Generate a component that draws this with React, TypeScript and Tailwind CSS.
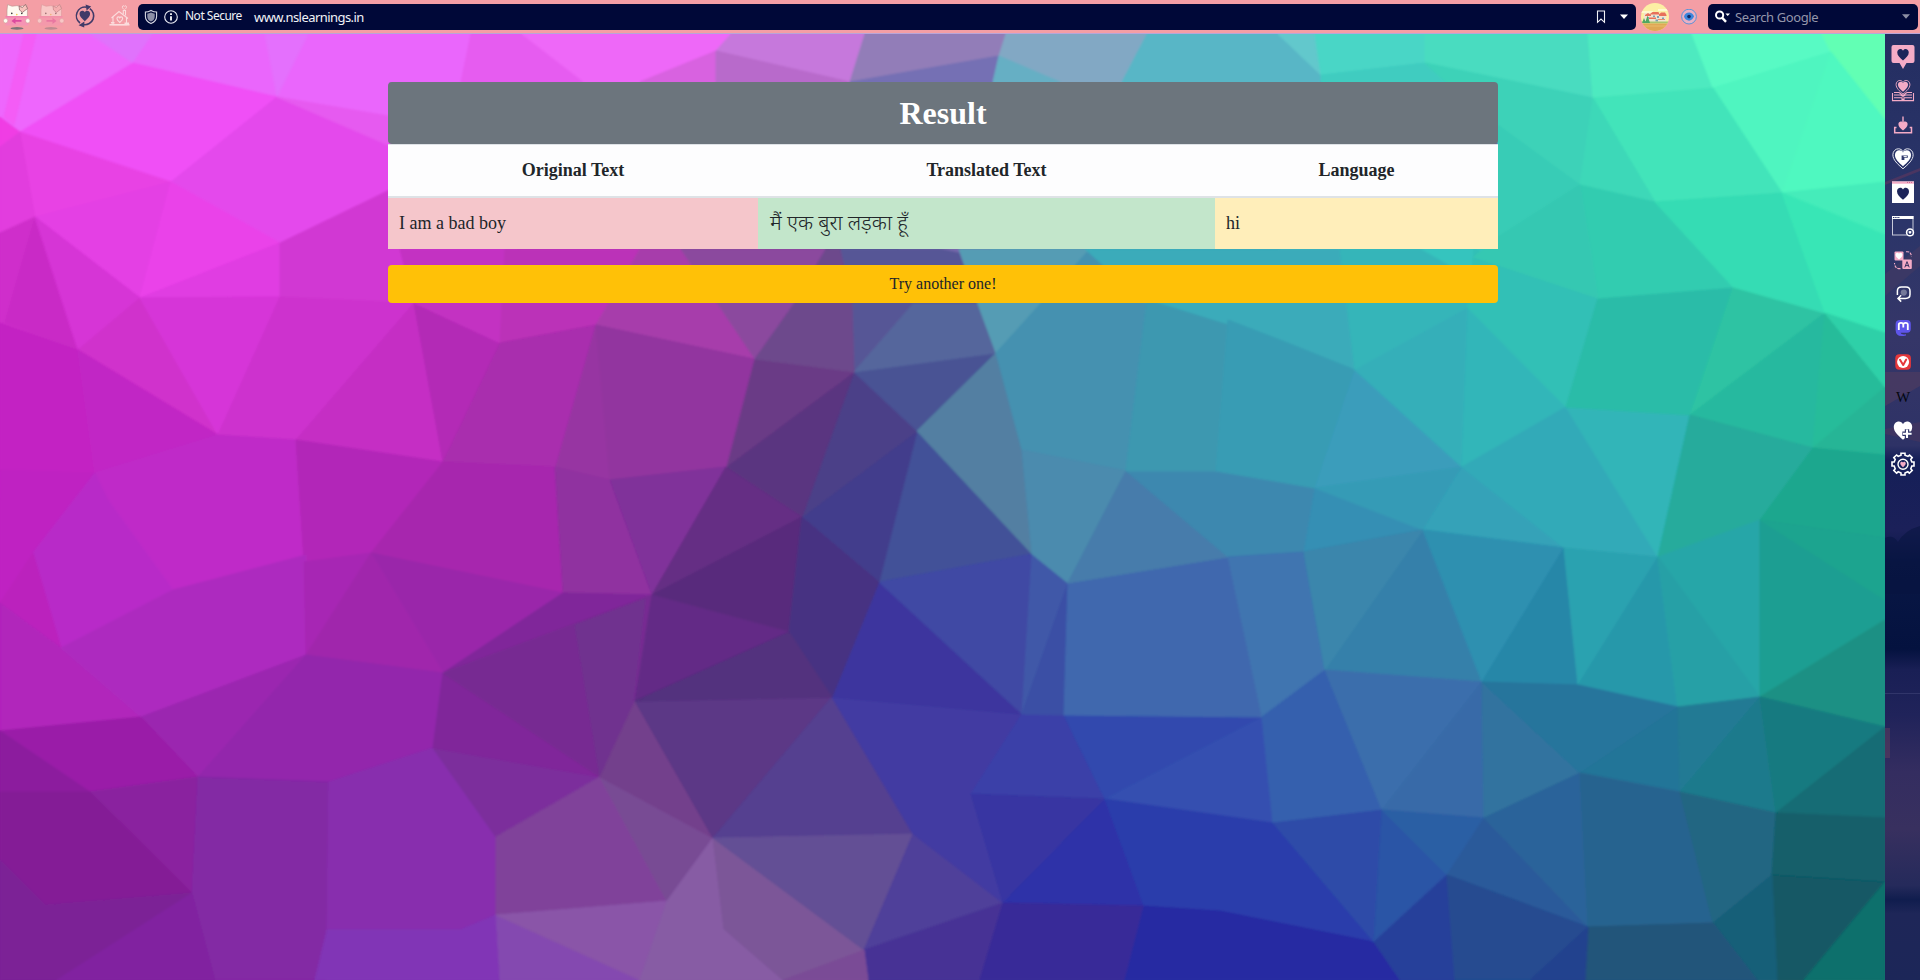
import React from "react";

const FACETS = `
#36c4be 1280,230 1510,230 1500,300 1280,300
#7668ac 900,240 990,240 990,262 900,262
#ee66fd 0,34 90,34 133,63 20,132 0,117
#f45cf6 24,34 36,34 14,125 4,117
#e072fc 90,34 153,34 133,63
#ea66fc 153,34 471,34 461,82 388,82 400,118 277,97 133,63
#e46ffd 265,34 308,34 277,97
#f050f6 20,132 133,63 277,97 171,182
#f03de4 0,117 20,132 0,147
#e843e4 20,132 171,182 35,217
#e23ede 0,147 20,132 35,217 0,233
#e44aec 277,97 400,145 400,187 280,243 171,182
#e65af0 277,97 400,118 400,150
#e43fe4 35,217 171,182 140,298
#ea43e9 171,182 280,243 140,298
#e03ce2 280,243 280,297 140,298
#d139d3 280,243 400,185 520,250 414,303 280,297
#cf2fcb 0,233 35,217 78,350 0,323
#c92cc6 35,217 78,350 5,322
#d634d6 35,217 140,298 78,350
#d030cc 78,350 140,298 218,435
#d636d8 140,298 280,297 218,435
#cd32ce 280,297 414,303 296,440 218,435
#c52ec4 414,303 443,462 296,440
#b32ab6 414,303 500,343 443,462
#c331c2 400,249 510,249 500,343 414,303
#bb33b8 505,249 640,249 640,303 596,325 500,343
#a92dae 500,343 596,325 610,480 555,470 443,462
#9734a2 596,325 610,480 555,470
#c324c3 0,323 78,350 95,473 0,500
#c127c5 78,350 218,435 95,473
#bf2cc8 218,435 296,440 304,562 173,590 108,500 95,473
#b228b8 296,440 443,462 371,553 304,562
#a728ae 443,462 555,467 563,593 371,553
#9030a0 555,467 610,480 652,595 563,593
#bf24c2 0,470 95,473 108,500 33,553 0,603
#b82bc8 95,473 108,500 173,590 61,648 33,553
#bb22bd 0,603 33,553 61,648
#b125bb 0,603 61,648 141,717 0,731
#ad2bbf 61,648 173,590 306,555 306,655 141,717
#a728b4 371,553 306,655 304,562
#9a26aa 371,553 563,593 443,673
#a026ac 371,553 443,673 306,655
#9b28b0 141,717 306,655 198,777
#9326ac 306,655 443,673 433,748 329,782 198,777
#9a1ea8 0,731 141,717 198,777 90,792
#8c1b9e 0,731 90,792 0,792
#8a229f 90,792 198,777 192,893
#841d96 0,792 90,792 192,893 45,905 0,860
#7c2096 0,860 45,905 192,893 57,980 0,980
#8329a4 192,893 198,777 329,782 327,980 215,980
#8124a0 192,893 215,980 57,980
#882fae 329,782 433,748 496,837 496,915 460,930 327,930
#8134b6 327,930 460,930 496,915 500,980 315,980
#7b2f9c 433,748 600,777 496,837
#80289a 443,673 563,593 652,595 632,710 600,777 433,748
#772b92 443,673 652,595 632,710 600,777
#70318f 575,625 645,599 632,710 600,777
#80439a 496,837 600,777 713,838 667,901 496,915
#784c94 600,777 713,838 667,901
#8448b0 496,915 640,980 500,980
#8a55a8 496,915 667,901 640,980
#875ca4 667,901 713,838 864,950 783,980 640,980
#7c5698 713,838 864,950 783,980 724,929
#733f8c 600,777 635,701 713,838
#5c3886 635,701 832,697 713,838
#543f90 832,697 913,834 713,838
#634f95 713,838 913,834 864,950
#50409a 913,834 1003,903 864,950
#463295 864,950 1003,903 980,980 868,980
#7a4c96 864,950 868,980 783,980
#433ba2 832,697 1022,714 971,794 1003,903 913,834
#3c369e 832,697 879,582 1022,714
#3b41a8 1022,714 1064,715 1105,799 971,794
#3736a2 971,794 1105,799 1003,903
#2e32a8 1105,799 1144,906 1003,903
#382a98 1003,903 1144,906 1125,980 980,980
#3049ae 1064,715 1262,717 1105,799
#3450b0 1262,717 1273,823 1105,799
#2c3dab 1105,799 1273,823 1374,942 1220,911 1144,906
#272ba2 1144,906 1220,911 1374,942 1400,980 1125,980
#435198 917,431 1032,554 879,582
#3f4aa4 879,582 1032,554 1022,714
#4158a8 1032,554 1068,583 1022,714
#3a4fa5 1068,583 1064,715 1022,714
#4068ae 1068,583 1228,557 1262,717 1064,715
#433d8c 917,431 879,582 802,517
#4b4088 854,372 917,431 802,517
#5a3580 854,372 802,517 726,467
#6a3a86 754,359 854,372 726,467
#4a5294 854,372 996,353 917,431
#565696 830,249 940,249 959,253 978,304 913,304 854,372
#55669c 978,304 996,353 854,372 913,304
#6d488c 754,359 793,304 825,249 840,249 852,304 854,372
#8b489e 680,249 825,249 793,304 754,359 717,304
#a73eab 596,325 640,249 680,249 717,304 754,359
#92359f 596,325 754,359 726,467 610,480
#80309a 610,480 726,467 652,595
#652f84 726,467 802,517 652,595
#582c7c 802,517 789,632 652,595
#473382 802,517 879,582 832,697 789,632
#632a86 652,595 789,632 635,701
#53307e 789,632 832,697 635,701
#527fa2 996,353 1022,450 1032,554 917,431
#559cb4 959,249 1090,249 996,353 978,304
#4591b0 1090,249 1147,300 1126,471 1022,450 996,353
#4b8bae 1022,450 1126,471 1068,583 1032,554
#467cab 1126,471 1228,557 1068,583
#3d88af 1126,471 1216,471 1315,488 1304,552 1228,557
#3aabba 1085,249 1350,249 1355,370 1228,325 1147,304
#3c98b0 1147,300 1228,325 1216,471 1126,471
#389cb4 1228,320 1280,340 1355,370 1315,488 1216,471
#36b5b9 1340,249 1420,249 1474,280 1468,308 1355,370
#3a9dbb 1355,370 1462,467 1315,488
#34afb9 1355,370 1468,308 1462,467
#31b6b9 1468,308 1566,407 1462,467
#33c0b6 1474,249 1598,298 1566,407 1468,308
#368fb4 1315,488 1423,530 1304,552
#359bb6 1315,488 1462,467 1423,530
#34a2b8 1462,467 1564,548 1423,530
#33aab8 1462,467 1566,407 1658,557 1564,548
#31b5b8 1566,407 1690,415 1658,557
#2bbca8 1598,298 1733,287 1690,415 1566,407
#2dc3a3 1733,287 1825,313 1690,415
#28b99f 1825,313 1813,448 1690,415
#27bc9a 1825,313 1885,387 1813,448
#25b596 1885,387 1885,455 1813,448
#25ab9c 1690,415 1813,448 1760,520 1658,557
#1ea78e 1813,448 1885,455 1885,538 1760,520
#e65cf0 471,34 522,34 584,82 461,82
#ee68f8 522,34 731,34 716,51 640,82 584,82
#d862e0 716,51 716,82 640,82
#c678dc 731,34 865,34 850,82 716,51
#b86acb 716,51 850,82 716,82
#927db8 865,34 1006,34 999,56 850,82
#7470b4 850,82 999,56 993,82
#82a8c4 1006,34 1147,34 1122,82 1050,82 999,56
#66afc4 999,56 1060,82 993,82
#58b6c6 1147,34 1278,34 1321,75 1320,82 1122,82
#62c8cc 1278,34 1315,34 1321,75
#4ad6c6 1315,34 1425,34 1425,63 1321,75
#3fccc0 1321,75 1425,63 1498,125 1321,82
#48dcc0 1425,34 1588,34 1593,98 1425,63
#4eeac0 1588,34 1692,34 1713,88 1593,98
#58fac4 1692,34 1885,34 1831,52 1713,88
#62ffb4 1822,34 1885,34 1885,120 1831,52
#4ff5c0 1713,88 1831,52 1782,193
#50f8c0 1831,52 1885,120 1885,182 1782,193
#42e4ba 1593,98 1713,88 1782,193 1655,202
#3dd2b8 1425,63 1593,98 1580,185 1498,130
#3dd8b8 1593,98 1655,202 1580,185
#38ccb6 1498,125 1580,185 1498,237
#33ccb0 1580,185 1655,202 1733,287 1598,298
#36c8b2 1498,237 1580,185 1598,298 1474,257
#36dcb4 1655,202 1782,193 1825,313 1733,287
#44ecba 1782,193 1885,182 1885,235
#38e6b6 1782,193 1885,235 1885,333 1825,313
#2fd0a8 1825,313 1885,333 1885,387
#3f74b0 1228,557 1304,552 1325,670 1262,717
#3680aa 1304,552 1423,530 1482,682 1325,670
#3a86ac 1304,552 1423,530 1325,670
#2d90b0 1423,530 1564,548 1482,682
#2887a8 1564,548 1578,685 1482,682
#2ca2b0 1564,548 1658,557 1578,685
#2898aa 1658,557 1678,707 1578,685
#26a6a8 1658,557 1760,520 1760,697 1678,707
#27a0a6 1658,557 1760,697 1678,707
#1f9e92 1760,520 1885,538 1885,620 1760,697
#1ea48f 1760,520 1885,538 1885,600
#1b9084 1885,620 1885,727 1760,697
#3560ae 1262,717 1325,670 1382,810 1273,823
#3b6eac 1325,670 1482,682 1382,810
#376aa8 1482,682 1484,818 1382,810
#31739f 1482,682 1580,773 1484,818
#28759c 1482,682 1578,685 1678,707 1580,773
#247498 1678,707 1680,792 1580,773
#217a94 1678,707 1760,697 1680,792
#1f7a8c 1760,697 1776,813 1680,792
#187a80 1760,697 1885,727 1776,813
#146c74 1885,727 1885,818 1776,813
#2d4ca8 1273,823 1382,810 1374,942
#2c54a6 1382,810 1447,875 1374,942
#2c5ea4 1382,810 1484,818 1447,875
#295a9a 1484,818 1588,927 1447,875
#2c639a 1484,818 1580,773 1588,927
#28648f 1580,773 1680,792 1713,923 1588,927
#206682 1680,792 1776,813 1772,875 1713,923
#125f6a 1776,813 1885,818 1885,882 1772,875
#125865 1772,875 1885,882 1804,980 1777,980
#0f706c 1885,882 1885,980 1804,980
#195e78 1772,875 1777,980 1757,980 1713,923
#21547a 1588,927 1713,923 1757,980 1585,980
#263f9a 1447,875 1455,980 1400,980 1374,942
#254c90 1447,875 1588,927 1530,980 1455,980
#24428e 1588,927 1585,980 1530,980
`
  .trim()
  .split("\n")
  .map((line) => {
    const at = line.indexOf(" ");
    return { fill: line.slice(0, at), points: line.slice(at + 1) };
  });

const HEART = "M0 5C-2.5 2.8-4.6 1-4.6-1.4-4.6-3-3.4-4.1-2.1-4.1-1.2-4.1-.4-3.6 0-2.8.4-3.6 1.2-4.1 2.1-4.1 3.4-4.1 4.6-3 4.6-1.4 4.6 1 2.5 2.8 0 5Z";

function Heart({ x, y, s = 1, fill, stroke, sw = 0 }: { x: number; y: number; s?: number; fill: string; stroke?: string; sw?: number }) {
  return <path d={HEART} transform={`translate(${x} ${y}) scale(${s})`} fill={fill} stroke={stroke} strokeWidth={sw} />;
}

function Backdrop() {
  return (
    <svg className="col-start-1 row-start-1 h-full w-full" viewBox="0 34 1885 946" preserveAspectRatio="none">
      <defs>
        <filter id="soften" filterUnits="userSpaceOnUse" x="0" y="34" width="1885" height="946">
          <feGaussianBlur stdDeviation="1.1" />
        </filter>
      </defs>
      <g id="facets">
        {FACETS.map((f, i) => (
          <polygon key={i} points={f.points} fill={f.fill} stroke={f.fill} strokeWidth="1" strokeLinejoin="round" />
        ))}
      </g>
      <use href="#facets" filter="url(#soften)" />
    </svg>
  );
}

function Kitty({ faded, forward }: { faded?: boolean; forward?: boolean }) {
  return (
    <svg className={faded ? "h-[34px] w-[34px] opacity-45" : "h-[34px] w-[34px]"} viewBox="0 0 34 34">
      <ellipse cx="17" cy="28.4" rx="6.5" ry="1.3" fill="#7d7478" />
      <path d="M7 16.5V10L7.6 4.6 12 6.2Q17 5.2 21 6.2L26.6 5 27.4 10V16.5Z" fill="#fffaf0" stroke="#b8908c" strokeWidth=".6" />
      <path d="M19 6L22.4 7.6 25.4 4.4 27.6 8.5 25 10.4 22.5 12.4 19.5 10Z" fill="#f7c3bc" stroke="#8a6264" strokeWidth=".7" />
      <circle cx="11.8" cy="13.4" r=".8" fill="#333" />
      <circle cx="21.8" cy="13.4" r=".8" fill="#333" />
      <circle cx="16.8" cy="14.6" r=".8" fill="#eec640" />
      <rect x="5.5" y="16.2" width="23" height="9.3" fill="#f594b4" />
      <rect x="5.5" y="16.2" width="23" height="1.2" fill="#f07cac" />
      <path d={forward ? "M12.5 20H18.5V17.8L22.5 20.9 18.5 24V21.8H12.5Z" : "M21.5 20H15.5V17.8L11.5 20.9 15.5 24V21.8H21.5Z"} fill="#dc4a9e" />
      <circle cx="5.6" cy="20.8" r="2.2" fill="#fffaf0" stroke="#c89a94" strokeWidth=".5" />
      <circle cx="27.8" cy="20.8" r="2.2" fill="#fffaf0" stroke="#c89a94" strokeWidth=".5" />
    </svg>
  );
}

function Toolbar() {
  return (
    <header className="flex h-[34px] w-full items-center border-b border-[#b9a5d8] bg-[#f49ea5]">
      <Kitty />
      <Kitty faded forward />
      <svg className="h-[34px] w-[34px]" viewBox="0 0 34 34">
        <g fill="none" stroke="#413a68" strokeWidth="1.6">
          <path d="M12 23A8.8 8.8 0 0 1 18.5 7.2" />
          <path d="M21.8 8.6A8.8 8.8 0 0 1 15.5 24.6" />
        </g>
        <path d="M17.6 4.4L23.2 6.4 18.6 10.4ZM16.4 21.6L10.6 25.2 16.2 27.6Z" fill="#413a68" />
        <Heart x={16.8} y={15.4} s={1.15} fill="#413a68" />
      </svg>
      <svg className="ml-[1px] h-[34px] w-[34px]" viewBox="0 0 34 34" fill="none" stroke="#fbdcdd" strokeWidth="1.1">
        <path d="M8.5 18L16 11.5 25 18.5M10 17V24.6H23.5V17.5" />
        <path d="M6.5 24.8H26.5M8 22.8H11.5M21.5 23.2H26" strokeWidth="1.6" />
        <path d="M20.3 14V10.5H22.5V15.5" />
        <Heart x={16.8} y={19.4} s={0.62} fill="none" stroke="#fbdcdd" sw={1.8} />
        <Heart x={21.4} y={7.6} s={0.45} fill="none" stroke="#fbdcdd" sw={2} />
      </svg>
      <div className="ml-[1px] flex h-[26px] w-[1498px] items-center rounded-[5px] bg-[#000838] text-[#f1f2f7]">
        <svg className="ml-[5px] h-[18px] w-[16px]" viewBox="0 0 16 18">
          <path d="M8 2.4C10 3.5 11.8 4 13.6 4V8.4C13.6 11.8 11.4 14 8 15.6 4.6 14 2.4 11.8 2.4 8.4V4C4.2 4 6 3.5 8 2.4Z" fill="none" stroke="#d7d9e4" strokeWidth="1.1" />
          <path d="M8 4.6C9.4 5.3 10.5 5.6 11.7 5.7V8.4C11.7 10.9 10.3 12.5 8 13.6 5.7 12.5 4.3 10.9 4.3 8.4V5.7C5.5 5.6 6.6 5.3 8 4.6Z" fill="#8d90a8" />
        </svg>
        <svg className="ml-[4px] h-[16px] w-[16px]" viewBox="0 0 16 16">
          <circle cx="8" cy="8" r="6.3" fill="none" stroke="#eceef5" strokeWidth="1.1" />
          <path d="M7.1 7.2H8.9V11.6H7.1ZM7.1 4.2H8.9V6H7.1Z" fill="#fff" />
        </svg>
        <span className="ml-[6px] w-[69px] whitespace-nowrap pb-[1px] font-['Noto_Sans','Open_Sans',sans-serif] text-[12px] leading-none tracking-[-0.5px]">Not Secure</span>
        <span className="grow whitespace-nowrap pt-[1px] font-['Noto_Sans','Open_Sans',sans-serif] text-[13px] leading-none tracking-[-0.55px]">www.nslearnings.in</span>
        <svg className="h-[16px] w-[12px]" viewBox="0 0 12 16">
          <path d="M2.5 2H9.5V13.3L6 10.1 2.5 13.3Z" fill="none" stroke="#f1f2f7" strokeWidth="1.1" />
        </svg>
        <svg className="ml-[13px] mr-[8px] h-[8px] w-[8px]" viewBox="0 0 8 8">
          <path d="M0 1.6H8L4 6Z" fill="#fff" />
        </svg>
      </div>
      <svg className="ml-[5px] h-[28px] w-[28px]" viewBox="0 0 28 28">
        <clipPath id="village">
          <circle cx="14" cy="14" r="14" />
        </clipPath>
        <g clipPath="url(#village)">
          <rect width="28" height="28" fill="#fcefa4" />
          <path d="M0 8H12V10H0ZM17 6H28V8H17Z" fill="#fff9cf" />
          <rect x="3" y="10" width="22" height="9" fill="#f1e3cf" />
          <path d="M4 12L7 10 10 12V13H4ZM9 11L11.5 9H17.5L18.5 11.5H9ZM18 11.5L20 9.5H24L25.5 12V13H18ZM8 14.5H15V16H8Z" fill="#e8705a" />
          <path d="M6 14H8V15.5H6ZM12 12.5H14V14H12ZM16 13H18V15H16ZM21 14.5H23V16.5H21ZM14.5 16.5H17V18.5H14.5Z" fill="#7a9fb4" />
          <path d="M17 16H24V17H17Z" fill="#e9896b" />
          <path d="M0 18.5H28V20.5H0Z" fill="#a9c46e" />
          <path d="M6.5 12.5L9 20H4ZM3 15L5 20H1Z" fill="#4fa763" />
          <rect y="20.5" width="28" height="8" fill="#dfa754" />
          <path d="M0 22.5H28V23.5H0Z" fill="#e9bc6b" />
        </g>
      </svg>
      <svg className="ml-[12px] h-[16px] w-[16px]" viewBox="0 0 16 16">
        <circle cx="8" cy="7.6" r="7.4" fill="#eab0c4" stroke="#5b93d8" strokeWidth="1" />
        <path d="M3 7.6Q4 3.4 8.4 3.4 12.4 4.2 13 7.6 11 12 7.4 11.6 4 11 3 7.6Z" fill="#3c86dc" />
        <circle cx="8" cy="7.6" r="1.8" fill="#102a66" />
      </svg>
      <div className="ml-[11px] flex h-[26px] w-[210px] items-center rounded-[5px] bg-[#000838]">
        <svg className="ml-[6px] h-[16px] w-[18px]" viewBox="0 0 18 16">
          <circle cx="5.6" cy="6" r="3.6" fill="none" stroke="#fff" strokeWidth="2" />
          <path d="M8 8.6L12 12.8" stroke="#fff" strokeWidth="2.4" />
          <path d="M11.4 4.4H16L13.7 7Z" fill="#fff" />
        </svg>
        <span className="ml-[3px] grow whitespace-nowrap pt-[1px] font-['Noto_Sans','Open_Sans',sans-serif] text-[13px] leading-none tracking-[-0.4px] text-[#9496aa]">Search Google</span>
        <svg className="mr-[8px] h-[8px] w-[8px]" viewBox="0 0 8 8">
          <path d="M0 1.2H8L4 5.8Z" fill="#8c8fa5" />
        </svg>
      </div>
    </header>
  );
}

function Slot({ children }: { children: React.ReactNode }) {
  return (
    <svg className="h-[34px] w-[34px] shrink-0" viewBox="0 0 34 34">
      {children}
    </svg>
  );
}

const PINK = "#f4abc6";
const NAVY = "#1c2459";

function Sidebar() {
  return (
    <aside className="grid w-[35px] shrink-0 overflow-hidden bg-[#1a2355]">
      <svg className="col-start-1 row-start-1 h-[946px] w-[35px]" viewBox="0 0 35 946">
        <defs>
          <linearGradient id="dusk" x1="0" y1="0" x2="0" y2="1">
            <stop offset="0" stopColor="#242e62" />
            <stop offset=".2" stopColor="#2b3569" />
            <stop offset=".32" stopColor="#353668" />
            <stop offset=".435" stopColor="#2e3266" />
            <stop offset=".45" stopColor="#151f58" />
            <stop offset=".525" stopColor="#1b2059" />
            <stop offset=".56" stopColor="#091745" />
            <stop offset=".65" stopColor="#04123f" />
            <stop offset=".672" stopColor="#191f55" />
            <stop offset=".72" stopColor="#20235a" />
            <stop offset=".78" stopColor="#342d60" />
            <stop offset=".84" stopColor="#38305f" />
            <stop offset=".9" stopColor="#252a5b" />
            <stop offset=".915" stopColor="#101d4e" />
            <stop offset=".93" stopColor="#1e2658" />
            <stop offset="1" stopColor="#1c2658" />
          </linearGradient>
        </defs>
        <rect width="35" height="946" fill="url(#dusk)" />
        <path d="M0 148L35 134V137L0 151Z" fill="#4a3561" />
        <path d="M0 240L35 212V232L0 262Z" fill="#3b3865" />
        <path d="M0 338H35V352L0 372Z" fill="#4a3b62" opacity=".8" />
        <path d="M0 395L35 388V408L0 400Z" fill="#443560" opacity=".7" />
        <path d="M0 504Q8 500 13 508 20 496 35 492V560H0Z" fill="#07143f" opacity=".55" />
        <path d="M0 694H5V724H0Z" fill="#7b4a5e" opacity=".35" />
        <path d="M0 659H35V660H0Z" fill="#3a3f72" opacity=".7" />
      </svg>
      <nav className="col-start-1 row-start-1 flex flex-col items-center pl-[1px] pt-[5px]">
        <Slot>
          <path d="M7.5 6H26.5Q28.5 6 28.5 8V22Q28.5 24 26.5 24H20.5L17 30 13.5 24H7.5Q5.5 24 5.5 22V8Q5.5 6 7.5 6Z" fill={PINK} />
          <Heart x={17} y={15.2} s={1.25} fill={NAVY} />
        </Slot>
        <Slot>
          <Heart x={17} y={13.6} s={1.5} fill="none" stroke={PINK} sw={0.6} />
          <Heart x={17} y={13.2} s={1.1} fill={PINK} />
          <path d="M6.5 20V27.6H27.5V20M8 19.5H13L17 22.4 21 19.5H26M8 22H14.5L17 23.4 19.5 22H26M8 24.8H16V26.4H18V24.8H26" fill="none" stroke={PINK} strokeWidth="1.1" />
        </Slot>
        <Slot>
          <path d="M17 9.5V18" stroke={PINK} strokeWidth="1.4" />
          <Heart x={17} y={18.6} s={1} fill={PINK} />
          <path d="M10.5 20.5H8.7V25.8H25.5V20.5H23.7" fill="none" stroke={PINK} strokeWidth="1.5" />
        </Slot>
        <Slot>
          <Heart x={17} y={16.8} s={2.2} fill="none" stroke="#e6e7f0" sw={0.45} />
          <Heart x={17} y={16.4} s={1.75} fill="#fff" />
          <path d="M15.6 14.4H21.8V16.8H18.4V19H15.6Z" fill="#303a6c" />
          <path d="M17.6 15.6H20.8" stroke="#fff" strokeWidth="1" />
        </Slot>
        <Slot>
          <rect x="6" y="6.5" width="22" height="21.5" fill="#fff" />
          <rect x="6" y="6.5" width="22" height="2.2" fill={PINK} />
          <path d="M21 7.4H27" stroke="#c0557f" strokeWidth=".8" strokeDasharray="1 1" />
          <Heart x={17} y={18.2} s={1.3} fill={NAVY} />
        </Slot>
        <Slot>
          <rect x="6.5" y="7.5" width="20.5" height="18.5" fill="none" stroke="#c7cad9" strokeWidth="1" />
          <rect x="6" y="7" width="21.5" height="3" fill="#fff" />
          <path d="M7 8.5H14" stroke="#28336a" strokeWidth="1" strokeDasharray="1.4 .8" />
          <circle cx="24" cy="23.4" r="3.4" fill="#28336a" stroke="#fff" strokeWidth="1.6" />
          <Heart x={24} y={23.4} s={0.32} fill="#fff" />
        </Slot>
        <Slot>
          <rect x="8.5" y="8.5" width="9" height="9" rx="1" fill={PINK} />
          <Heart x={13} y={12.8} s={0.75} fill="#fff" />
          <rect x="16.3" y="16.5" width="9.5" height="9.5" rx="1" fill={PINK} />
          <path d="M18.8 24.4L21 18.6 23.2 24.4M19.6 22.6H22.4" fill="none" stroke="#3a315f" strokeWidth="1" />
          <path d="M20 8.8Q25 8 25.5 13.5M14.5 25.6Q8.8 26 8.5 20" fill="none" stroke={PINK} strokeWidth="1.1" strokeDasharray="3 1" />
        </Slot>
        <Slot>
          <path d="M11.4 18V14Q11.4 10 15.4 10H20Q24 10 24 14V17.5Q24 21.4 19.5 21.4H12.5M15.2 18.2L12 21.4 15.2 24.6" fill="none" stroke="#fff" strokeWidth="1.5" />
          <circle cx="17.8" cy="15.6" r="3.1" fill="#75799a" />
        </Slot>
        <Slot>
          <path d="M9.6 13Q9.6 9 14 9H21Q24.8 9 24.8 13V18Q24.8 21.6 21 21.8H14.5Q15.2 24 20 23.2V24.4Q9.8 27 9.6 19Z" fill="#5e55ea" />
          <path d="M12.8 19V13.6Q12.8 11.8 15 11.8T17.3 13.8V16.6M17.3 13.8Q17.3 11.8 19.6 11.8T21.8 13.8V19" fill="none" stroke="#fff" strokeWidth="1.8" />
        </Slot>
        <Slot>
          <rect x="9.3" y="9.2" width="15.6" height="15.6" rx="4" fill="#e5373b" />
          <circle cx="17.1" cy="17" r="6" fill="#fff" />
          <path d="M14 14.8L17.2 20 20.2 14.6" fill="none" stroke="#e5373b" strokeWidth="2" strokeLinecap="round" strokeLinejoin="round" />
        </Slot>
        <div className="flex h-[34px] w-[34px] shrink-0 items-center justify-center pt-[3px] font-['Liberation_Serif',serif] text-[15px] leading-none text-[#05070f]">W</div>
        <Slot>
          <Heart x={17} y={16.8} s={2} fill="#fff" />
          <path d="M21 16.2V25.4M16.4 20.8H25.6" stroke="#2d3267" strokeWidth="4.4" />
          <path d="M21 16.6V25M17 20.8H25.6" stroke="#fff" strokeWidth="2.1" />
        </Slot>
        <Slot>
          <path
            d="M15 8.2V6.2H19V8.2L22 9.4 23.6 8 26.2 10.6 24.8 12.4 25.8 15H28V19H25.8L24.8 21.8 26.2 23.4 23.4 26.2 21.8 24.8 19 26V28H15V26L12.2 24.8 10.6 26.2 7.8 23.4 9.2 21.8 8.2 19H6V15H8.2L9.2 12.4 7.8 10.6 10.6 8 12.2 9.4Z"
            fill="none"
            stroke="#fff"
            strokeWidth="1.6"
          />
          <circle cx="17" cy="17.2" r="5" fill="none" stroke="#fff" strokeWidth="1.4" />
          <Heart x={17} y={17.2} s={0.6} fill={PINK} />
        </Slot>
      </nav>
    </aside>
  );
}

function ResultPanel() {
  return (
    <section className="col-start-1 row-start-1 ml-[388px] mt-[48px] w-[1110px] self-start font-['Liberation_Serif','Noto_Sans_Devanagari','Noto_Sans',serif] text-[#212529]">
      <h2 className="flex h-[62px] items-center justify-center rounded-[4px] bg-[#6c757d] text-[32px] font-bold leading-none text-white">Result</h2>
      <div className="grid grid-cols-[370px_457px_283px] text-[18px] leading-[27px]">
        <div className="col-span-3 grid h-[54px] grid-cols-subgrid items-center border-b-2 border-t border-[#dee2e6] bg-[#fdfdfe] text-center font-bold">
          <div>Original Text</div>
          <div>Translated Text</div>
          <div>Language</div>
        </div>
        <div className="flex h-[51px] items-center bg-[#f5c6cb] pl-[11px]">I am a bad boy</div>
        <div className="flex h-[51px] items-center bg-[#c3e6cb] pb-[3px] pl-[12px] text-[20.8px] font-light">मैं एक बुरा लड़का हूँ</div>
        <div className="flex h-[51px] items-center bg-[#ffeeba] pl-[11px]">hi</div>
      </div>
      <button className="mt-[16px] flex h-[38px] w-full items-center justify-center rounded-[4px] bg-[#ffc107] text-[16px] leading-none">Try another one!</button>
    </section>
  );
}

export default function App() {
  return (
    <div className="flex h-[980px] w-[1920px] flex-col overflow-hidden">
      <Toolbar />
      <div className="flex h-[946px]">
        <main className="grid w-[1885px] grid-cols-1 grid-rows-[946px] overflow-hidden bg-[#7a40a0]">
          <Backdrop />
          <ResultPanel />
        </main>
        <Sidebar />
      </div>
    </div>
  );
}
